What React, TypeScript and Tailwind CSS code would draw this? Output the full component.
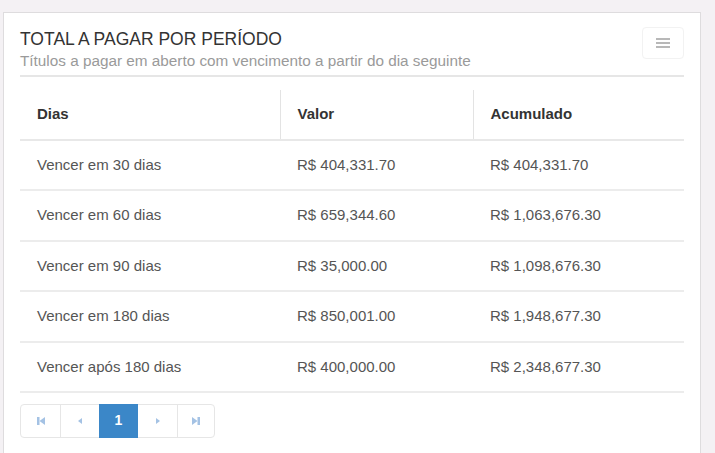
import { useState } from 'react';

const rows = [
  { dias: 'Vencer em 30 dias', valor: 'R$ 404,331.70', acumulado: 'R$ 404,331.70' },
  { dias: 'Vencer em 60 dias', valor: 'R$ 659,344.60', acumulado: 'R$ 1,063,676.30' },
  { dias: 'Vencer em 90 dias', valor: 'R$ 35,000.00', acumulado: 'R$ 1,098,676.30' },
  { dias: 'Vencer em 180 dias', valor: 'R$ 850,001.00', acumulado: 'R$ 1,948,677.30' },
  { dias: 'Vencer após 180 dias', valor: 'R$ 400,000.00', acumulado: 'R$ 2,348,677.30' },
];

function PagerIcon({ kind }: { kind: 'first' | 'prev' | 'next' | 'last' }) {
  return (
    <svg width="10" height="10" viewBox="0 0 10 10" fill="#a4c2e4">
      {kind === 'first' && (
        <>
          <rect x="1" y="1" width="2.5" height="8" />
          <path d="M9 1 L3.5 5 L9 9 Z" />
        </>
      )}
      {kind === 'prev' && <path d="M7 2 L3 5 L7 8 Z" />}
      {kind === 'next' && <path d="M3 2 L7 5 L3 8 Z" />}
      {kind === 'last' && (
        <>
          <path d="M1 1 L6.5 5 L1 9 Z" />
          <rect x="6.5" y="1" width="2.5" height="8" />
        </>
      )}
    </svg>
  );
}

export default function App() {
  const [page, setPage] = useState(1);

  return (
    <div
      className="min-h-[453px] bg-[#f4f1f4] pt-3 pl-[3px] pr-[14px]"
      style={{ fontFamily: '"Liberation Sans", Arial, sans-serif' }}
    >
      <div className="bg-white border border-[#dedcde] border-b-0 h-[441px] px-4">
        <div className="flex items-start justify-between pt-[14px] border-b-2 border-[#e6e6e6] pb-[4px]">
          <div>
            <h2 className="text-[17.5px] leading-[24px] text-[#333]">TOTAL A PAGAR POR PERÍODO</h2>
            <p className="text-[15.3px] leading-[20px] text-[#9a9a9a]">
              Títulos a pagar em aberto com vencimento a partir do dia seguinte
            </p>
          </div>
          <button className="w-[42px] h-[32px] border border-[#f2f2f2] rounded flex items-center justify-center">
            <svg width="14" height="12" viewBox="0 0 14 12" fill="#b8b8b8">
              <rect x="0" y="1" width="14" height="2" />
              <rect x="0" y="5" width="14" height="2" />
              <rect x="0" y="9" width="14" height="2" />
            </svg>
          </button>
        </div>

        <table className="w-full mt-[13px] border-collapse text-[15px]">
          <thead>
            <tr className="h-[50px] border-b-2 border-[#e8e8e8]">
              <th className="w-[260px] text-left font-bold text-[#333] pl-[17px] border-r border-[#e3e3e3]">Dias</th>
              <th className="w-[193px] text-left font-bold text-[#333] pl-[17px] border-r border-[#e3e3e3]">Valor</th>
              <th className="text-left font-bold text-[#333] pl-[17px]">Acumulado</th>
            </tr>
          </thead>
          <tbody>
            {rows.map((r) => (
              <tr key={r.dias} className="h-[50.4px] border-b-2 border-[#ececec]">
                <td className="pl-[17px] text-[#555]">{r.dias}</td>
                <td className="pl-[17px] text-[#555]">{r.valor}</td>
                <td className="pl-[17px] text-[#555]">{r.acumulado}</td>
              </tr>
            ))}
          </tbody>
        </table>

        <div className="mt-[11px] inline-flex border border-[#e6e6e6] rounded h-[34px]">
          <button className="w-[40px] flex items-center justify-center border-r border-[#e6e6e6]">
            <PagerIcon kind="first" />
          </button>
          <button className="w-[38px] flex items-center justify-center">
            <PagerIcon kind="prev" />
          </button>
          <button
            onClick={() => setPage(1)}
            className="w-[39px] -my-px h-[34px] flex items-center justify-center bg-[#3b87c8] text-white font-bold text-[14px]"
          >
            {page}
          </button>
          <button className="w-[40px] flex items-center justify-center border-r border-[#e6e6e6]">
            <PagerIcon kind="next" />
          </button>
          <button className="w-[36px] flex items-center justify-center">
            <PagerIcon kind="last" />
          </button>
        </div>
      </div>
    </div>
  );
}
